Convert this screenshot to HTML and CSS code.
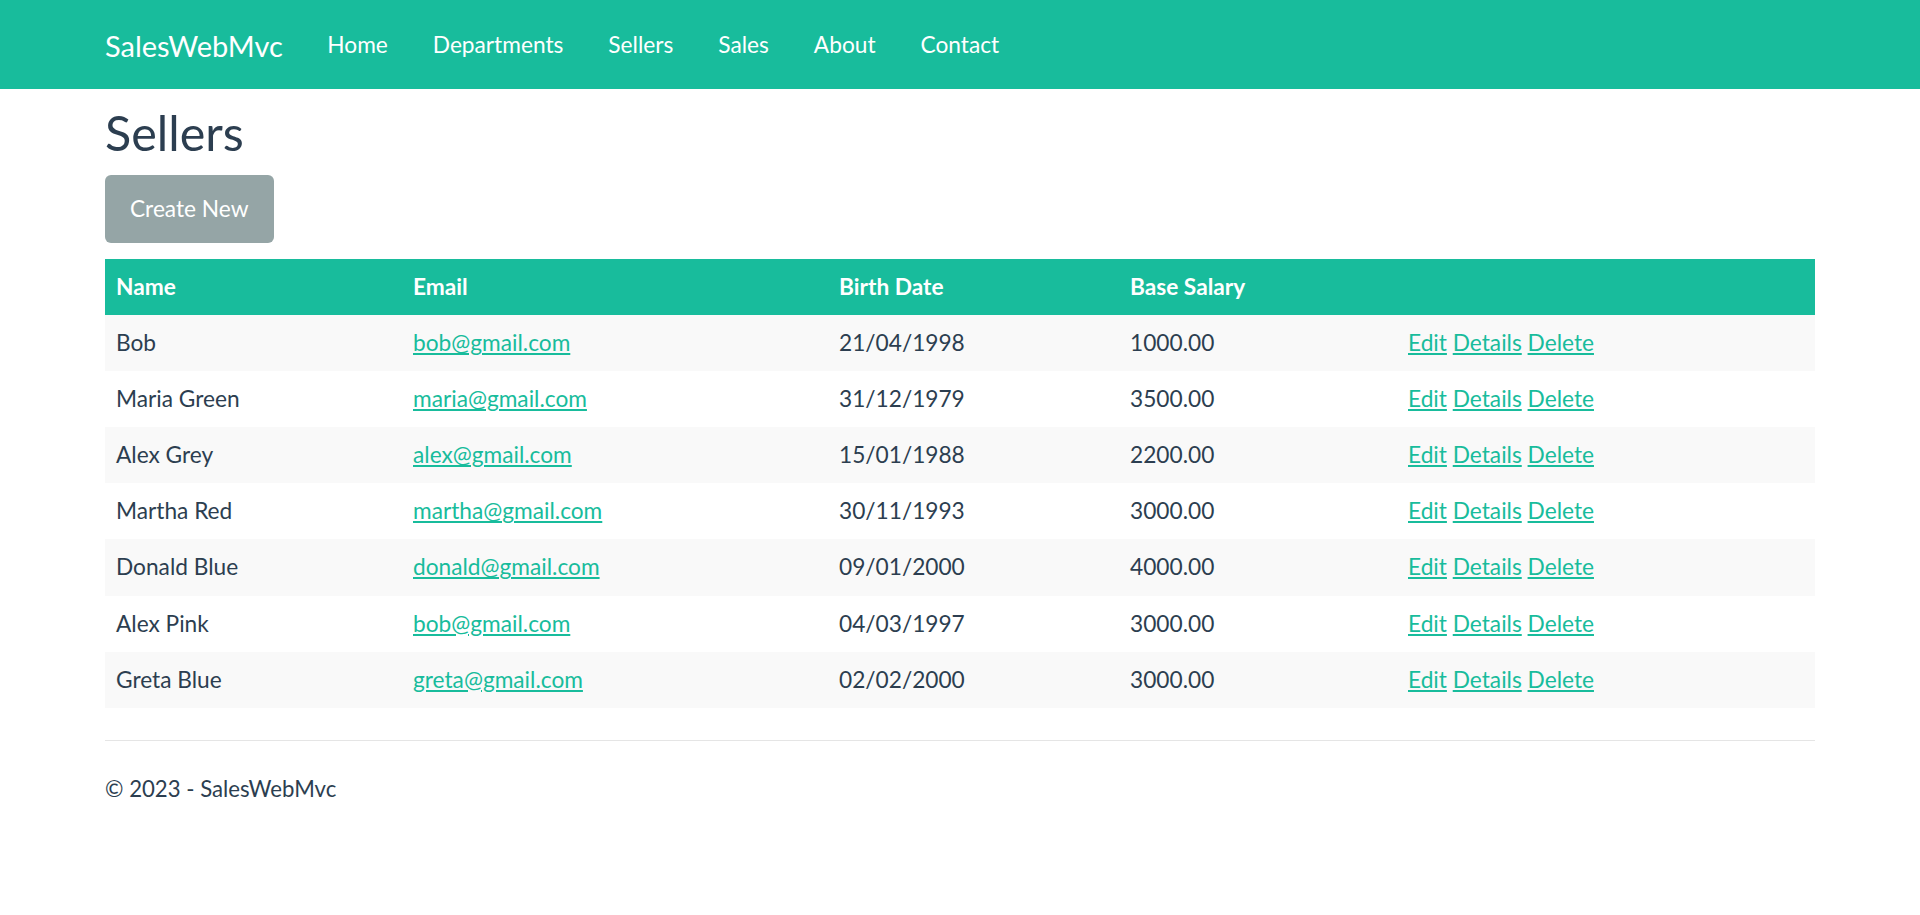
FILE: index.html
```html
<!DOCTYPE html>
<html lang="en">
<head>
<meta charset="utf-8">
<title>Sellers - SalesWebMvc</title>
<link rel="stylesheet" href="styles.css">
</head>
<body>
<header class="navbar">
  <div class="container nav-inner">
    <a class="brand" href="#">SalesWebMvc</a>
    <nav class="nav-links">
      <a class="nav-link" href="#">Home</a>
      <a class="nav-link" href="#">Departments</a>
      <a class="nav-link" href="#">Sellers</a>
      <a class="nav-link" href="#">Sales</a>
      <a class="nav-link" href="#">About</a>
      <a class="nav-link" href="#">Contact</a>
    </nav>
  </div>
</header>
<main class="container main">
  <h1 class="title">Sellers</h1>
  <p class="actions-top"><a class="btn" href="#">Create New</a></p>
  <table class="table">
    <colgroup>
      <col class="c-name"><col class="c-email"><col class="c-birth"><col class="c-salary"><col class="c-act">
    </colgroup>
    <thead>
      <tr><th>Name</th><th>Email</th><th>Birth Date</th><th>Base Salary</th><th></th></tr>
    </thead>
    <tbody>
      <tr><td>Bob</td><td><a href="#">bob@gmail.com</a></td><td>21/04/1998</td><td>1000.00</td><td><a href="#">Edit</a> <a href="#">Details</a> <a href="#">Delete</a></td></tr>
      <tr><td>Maria Green</td><td><a href="#">maria@gmail.com</a></td><td>31/12/1979</td><td>3500.00</td><td><a href="#">Edit</a> <a href="#">Details</a> <a href="#">Delete</a></td></tr>
      <tr><td>Alex Grey</td><td><a href="#">alex@gmail.com</a></td><td>15/01/1988</td><td>2200.00</td><td><a href="#">Edit</a> <a href="#">Details</a> <a href="#">Delete</a></td></tr>
      <tr><td>Martha Red</td><td><a href="#">martha@gmail.com</a></td><td>30/11/1993</td><td>3000.00</td><td><a href="#">Edit</a> <a href="#">Details</a> <a href="#">Delete</a></td></tr>
      <tr><td>Donald Blue</td><td><a href="#">donald@gmail.com</a></td><td>09/01/2000</td><td>4000.00</td><td><a href="#">Edit</a> <a href="#">Details</a> <a href="#">Delete</a></td></tr>
      <tr><td>Alex Pink</td><td><a href="#">bob@gmail.com</a></td><td>04/03/1997</td><td>3000.00</td><td><a href="#">Edit</a> <a href="#">Details</a> <a href="#">Delete</a></td></tr>
      <tr><td>Greta Blue</td><td><a href="#">greta@gmail.com</a></td><td>02/02/2000</td><td>3000.00</td><td><a href="#">Edit</a> <a href="#">Details</a> <a href="#">Delete</a></td></tr>
    </tbody>
  </table>
</main>
<footer class="container footer">
  <div class="footer-text">&copy; 2023 - SalesWebMvc</div>
</footer>
</body>
</html>
```
FILE: styles.css
```css
* { box-sizing: border-box; }
html, body { margin: 0; padding: 0; }
body {
  font-family: Lato, "Open Sans", "Liberation Sans", sans-serif;
  font-size: 22.7px;
  line-height: 1.5;
  color: #2c3e50;
  background: #fff;
}
a { color: #18bc9c; }
.container {
  width: 1710px;
  margin: 0 auto;
}
.navbar {
  background: #18bc9c;
  height: 89px;
}
.nav-inner {
  display: flex;
  align-items: center;
  height: 89px;
  padding-top: 2px;
}
.brand {
  color: #fff;
  text-decoration: none;
  font-size: 29px;
  line-height: 1.5;
  margin-right: 22px;
}
.nav-links { display: flex; }
.nav-link {
  color: #fff;
  text-decoration: none;
  padding: 0 22.5px;
  font-size: 22.7px;
}
.main { padding-bottom: 32px; }
.title {
  font-size: 48.5px;
  font-weight: 400;
  line-height: 1.2;
  margin: 14px 0 14px;
}
.actions-top { margin: 0 0 16px; }
.btn {
  display: inline-block;
  background: #95a5a6;
  color: #fff;
  text-decoration: none;
  padding: 17px 25px;
  line-height: 1.5;
  font-size: 22.7px;
  border-radius: 6px;
}
.table {
  width: 100%;
  border-collapse: collapse;
  table-layout: fixed;
}
.c-name { width: 297px; }
.c-email { width: 426px; }
.c-birth { width: 291px; }
.c-salary { width: 278px; }
.c-act { width: 418px; }
.table th, .table td {
  text-align: left;
  padding: 11px 11px;
  height: 56px;
  vertical-align: top;
}
.table thead tr { background: #18bc9c; color: #fff; }
.table th { font-weight: 700; }
.table tbody tr:nth-child(odd) { background: #f9f9f9; }
.footer {
  border-top: 1px solid #e5e5e5;
}
.footer-text { padding: 31px 0; line-height: 1.5; font-size: 22.2px; }
```
